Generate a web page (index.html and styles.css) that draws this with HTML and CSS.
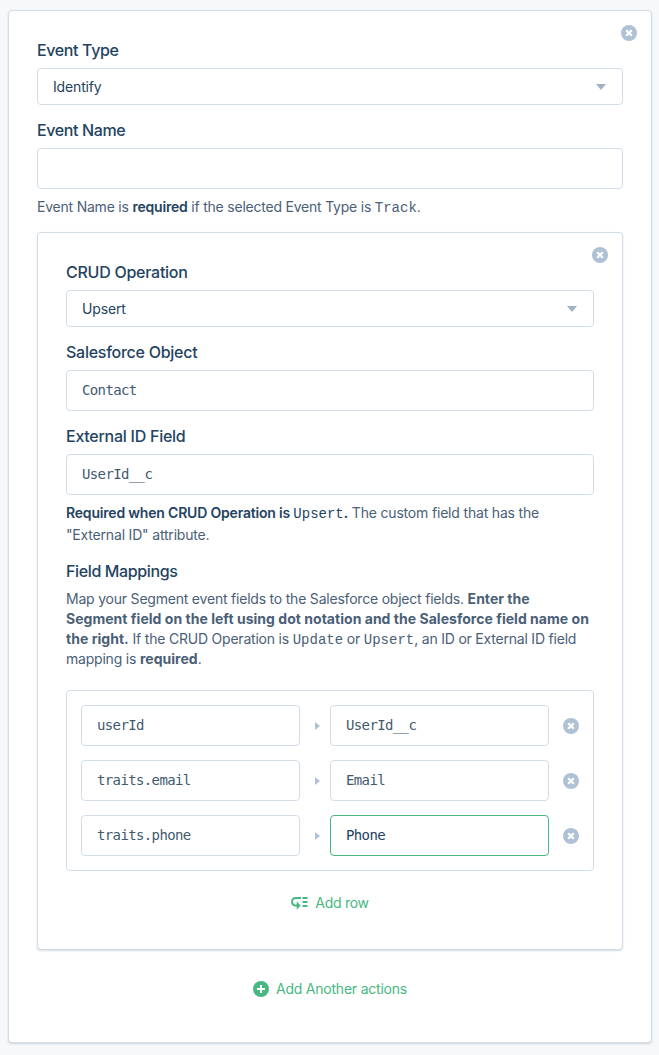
FILE: index.html
```html
<!DOCTYPE html>
<html lang="en">
<head>
<meta charset="utf-8">
<title>Event mapping</title>
<link rel="stylesheet" href="styles.css">
</head>
<body>
<svg class="defs" width="0" height="0" aria-hidden="true">
  <symbol id="close" viewBox="0 0 16 16"><circle cx="8" cy="8" r="8" fill="currentColor"/><path d="M5.2 5.2l5.6 5.6M10.8 5.2l-5.6 5.6" stroke="#fff" stroke-width="2.3"/></symbol>
</svg>
<main class="card outer">
  <button class="close corner" aria-label="Remove event"><svg><use href="#close"/></svg></button>
  <h2 class="label">Event Type</h2>
  <div class="select"><span>Identify</span><i class="caret"></i></div>
  <h2 class="label">Event Name</h2>
  <div class="input"></div>
  <p class="help">Event Name is <strong>required</strong> if the selected Event Type is <code>Track</code>.</p>

  <section class="card inner">
    <button class="close corner" aria-label="Remove action"><svg><use href="#close"/></svg></button>
    <h2 class="label wide">CRUD Operation</h2>
    <div class="select"><span>Upsert</span><i class="caret"></i></div>
    <h2 class="label wide">Salesforce Object</h2>
    <div class="input">Contact</div>
    <h2 class="label wide">External ID Field</h2>
    <div class="input">UserId__c</div>
    <p class="help"><strong>Required when CRUD Operation is <code>Upsert</code>.</strong> <span>The custom field that has the<br>"External ID" attribute.</span></p>
    <h2 class="label">Field Mappings</h2>
    <p class="intro">Map your Segment event fields to the Salesforce object fields. <b>Enter the<br>Segment field on the left using dot notation and the Salesforce field name on<br>the right.</b> If the CRUD Operation is <code>Update</code> or <code>Upsert</code>, an ID or External ID field<br>mapping is <b>required</b>.</p>
    <div class="mappings">
      <div class="row"><div class="input">userId</div><i class="arrow"></i><div class="input">UserId__c</div><button class="close" aria-label="Remove row"><svg><use href="#close"/></svg></button></div>
      <div class="row"><div class="input">traits.email</div><i class="arrow"></i><div class="input">Email</div><button class="close" aria-label="Remove row"><svg><use href="#close"/></svg></button></div>
      <div class="row"><div class="input">traits.phone</div><i class="arrow"></i><div class="input focused">Phone</div><button class="close" aria-label="Remove row"><svg><use href="#close"/></svg></button></div>
    </div>
    <button class="add add-row">
      <svg width="17" height="14" viewBox="0 0 17 14"><path d="M10 2H5C2.6 2 1.1 3.6 1.1 5.8S2.6 9.6 5 9.6H6.5" fill="none" stroke="currentColor" stroke-width="2"/><path d="M5.7 5.4L9.7 9.6l-4 4.2zM11.5 1h5v2h-5zM11.5 5h5v2h-5zM11.5 9h5v2h-5z" fill="currentColor"/></svg>
      <span>Add row</span>
    </button>
  </section>
  <button class="add add-action">
    <svg width="16" height="16" viewBox="0 0 16 16"><circle cx="8" cy="8" r="8" fill="currentColor"/><path d="M8 4v8M4 8h8" stroke="#fff" stroke-width="2"/></svg>
    <span>Add Another actions</span>
  </button>
</main>
</body>
</html>
```
FILE: styles.css
```css
* { box-sizing: border-box; }
body {
  margin: 0;
  padding: 10px 7px 12px 8px;
  background: #f7f8fa;
  color: #4a6077;
  font: 14px/22px Inter, "Liberation Sans", sans-serif;
}
button { border: 0; padding: 0; background: none; font: inherit; }
.defs { position: absolute; }
.card {
  position: relative;
  border: 1px solid #d3dde8;
  border-radius: 4px;
  background: #fff;
  box-shadow: 0 1px 2px rgba(67, 90, 111, 0.22);
  padding: 27px 28px 0;
}
.outer { height: 1033px; }
.inner { height: 718px; margin-top: 14px; }
.close { display: block; width: 16px; height: 16px; color: #afc2d5; }
.close svg { display: block; width: 16px; height: 16px; }
.corner { position: absolute; top: 14px; right: 14px; }

.label {
  margin: 13px 0 6px;
  color: #234361;
  font-size: 16px;
  line-height: 24px;
  font-weight: 500;
  letter-spacing: -0.37px;
  white-space: nowrap;
}
.wide { letter-spacing: -0.26px; }
.corner + .label { margin-top: 0; }
.select, .input {
  display: flex;
  align-items: center;
  border: 1px solid #d3dde8;
  border-radius: 4px;
  background: #fff;
  padding: 0 15px;
}
.select { height: 37px; justify-content: space-between; color: #234361; letter-spacing: -0.15px; }
.input { height: 41px; padding-bottom: 2px; font: 14px/20px "DejaVu Sans Mono", monospace; letter-spacing: -0.63px; color: #425a70; }
.focused { border-color: #47b881; color: #234361; }
.caret {
  margin-right: 1px;
  border: 5px solid transparent;
  border-top: 6px solid #9fb3c6;
  border-bottom: 0;
}
.help { margin: 7px 0 0; letter-spacing: -0.22px; white-space: nowrap; }
.help strong { color: #234361; font-weight: 600; letter-spacing: -0.19px; }
.help span { letter-spacing: -0.18px; }
code { font: 14px/1 "Liberation Mono", monospace; letter-spacing: 0; }
.intro { margin: 6px 0 21px; line-height: 20px; letter-spacing: -0.21px; white-space: nowrap; }
.intro b { font-weight: 700; letter-spacing: 0.03px; }

.mappings {
  display: flex;
  flex-direction: column;
  gap: 14px;
  padding: 14px;
  border: 1px solid #d3dde8;
  border-radius: 4px;
}
.row { display: grid; grid-template-columns: 219px 30px 219px 30px; align-items: center; }
.arrow { margin-left: 15px; width: 0; border: 4px solid transparent; border-left: 5px solid #afc2d5; border-right: 0; }
.row .close { margin-left: 14px; }
.add { display: flex; align-items: center; gap: 7px; margin: 0 auto; color: #47b881; line-height: 22px; letter-spacing: -0.22px; white-space: nowrap; }
.add-row { margin-top: 21px; letter-spacing: -0.28px; }
.add-action { margin-top: 28px; }
```
